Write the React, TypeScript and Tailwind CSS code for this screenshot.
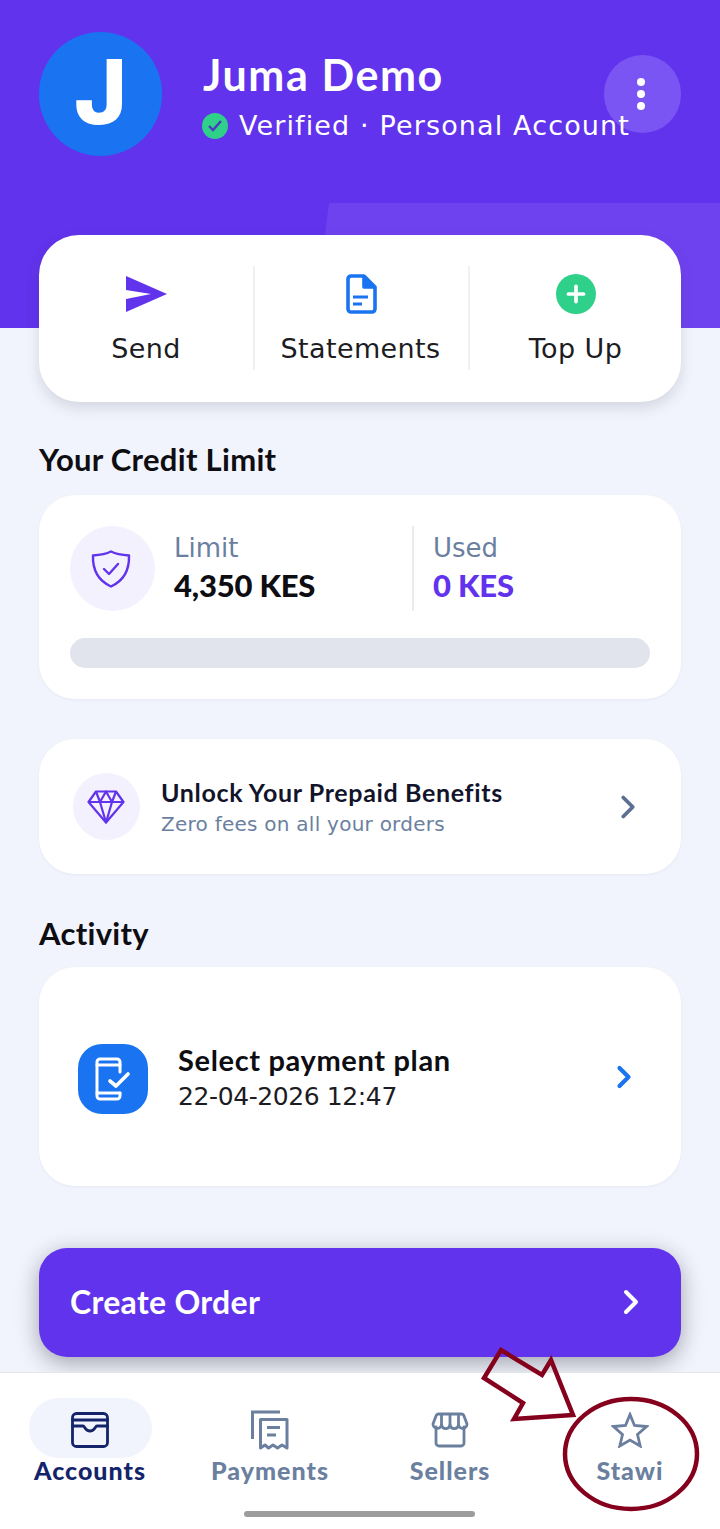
import { ChevronRight, Plus } from "lucide-react";

const heading = "font-['Lato','Liberation_Sans',sans-serif]";
const body = "font-['DejaVu_Sans','Noto_Sans',sans-serif]";

const SendIcon = () => (
  <svg width="42" height="36" viewBox="0 0 42 36" fill="#6133ec">
    <path d="M1 0 L42 18 L1 36 L1 23 L26 18 L1 14 Z" />
  </svg>
);

const StatementIcon = () => (
  <svg width="32" height="40" viewBox="0 0 32 40" fill="none" stroke="#1a73f0" strokeWidth="3.6" strokeLinejoin="round">
    <path d="M3 5 a3 3 0 0 1 3-3 h13 l11 11 v22 a3 3 0 0 1-3 3 h-21 a3 3 0 0 1-3-3 Z" />
    <path d="M19 2 v11 h11" fill="#1a73f0" />
    <path d="M8 23 h15 M8 30 h9" strokeWidth="3" />
  </svg>
);

const ShieldIcon = () => (
  <svg width="40" height="38" viewBox="0 0 40 38" fill="none" stroke="#6133ec" strokeWidth="2.4" strokeLinejoin="round" strokeLinecap="round">
    <path d="M20 1.5 C25 4 31 5 38 5.5 C38.5 20 32 31 20 36.5 C8 31 1.5 20 2 5.5 C9 5 15 4 20 1.5 Z" />
    <path d="M13 19 L18 24 L27 14" />
  </svg>
);

const DiamondIcon = () => (
  <svg width="38" height="34" viewBox="0 0 38 34" fill="none" stroke="#6133ec" strokeWidth="2.2" strokeLinejoin="round">
    <path d="M9 1.5 H29 L36.5 12 L19 32.5 L1.5 12 Z" />
    <path d="M1.5 12 H36.5 M9 1.5 L13 12 L19 1.5 L25 12 L29 1.5 M13 12 L19 32.5 L25 12" />
  </svg>
);

const PhoneCheckIcon = () => (
  <svg width="36" height="44" viewBox="0 0 36 44" fill="none" stroke="#fff" strokeWidth="3" strokeLinecap="round" strokeLinejoin="round">
    <path d="M25 15 V5 a3 3 0 0 0-3-3 H5 a3 3 0 0 0-3 3 V39 a3 3 0 0 0 3 3 H22 a3 3 0 0 0 3-3 V36" />
    <path d="M2 8 H25 M2 36 H25" />
    <path d="M15 24 L21 29 L33 17" strokeWidth="3.6" />
  </svg>
);

const WalletIcon = () => (
  <svg width="38" height="36" viewBox="0 0 38 36" fill="none" stroke="#14246b" strokeWidth="2.8" strokeLinejoin="round" strokeLinecap="round">
    <rect x="1.5" y="1.5" width="35" height="33" rx="4" />
    <path d="M1.5 8 H36.5" />
    <path d="M1.5 14 H12 C14 14 14 19 19 19 C24 19 24 14 26 14 H36.5" />
  </svg>
);

const ReceiptIcon = () => (
  <svg width="38" height="40" viewBox="0 0 38 40" fill="none" stroke="#6b7f9f" strokeWidth="3">
    <path d="M1.5 29 V2 H29" />
    <path d="M9.5 38 V9.5 H36 V38 L31 35 L26.5 38 L22 35 L17.500 38 L14 35 Z" strokeLinejoin="round" />
    <path d="M16 17.500 H29 M16 25 H25" />
  </svg>
);

const StoreIcon = () => (
  <svg width="38" height="36" viewBox="0 0 38 36" fill="none" stroke="#6b7f9f" strokeWidth="2.800" strokeLinejoin="round" strokeLinecap="round">
    <path d="M5 15 V31 a3 3 0 0 0 3 3 H30 a3 3 0 0 0 3-3 V15" />
    <path d="M8 2 H30 a3 3 0 0 1 3 2 L36 12 a4.300 4.300 0 0 1-8.500 1 a4.300 4.300 0 0 1-8.500 0 a4.300 4.300 0 0 1-8.500 0 a4.300 4.300 0 0 1-8.500-1 L5 4 a3 3 0 0 1 3-2 Z" />
    <path d="M10.500 2.500 V13 M19 2.500 V13 M27.500 2.500 V13" />
  </svg>
);

const StarIcon = () => (
  <svg width="38" height="36" viewBox="0 0 38 36" fill="none" stroke="#6b7f9f" strokeWidth="2.800" strokeLinejoin="miter">
    <path d="M19 2.500 L23.500 13.500 L35.500 14.500 L26.500 22.500 L29.200 34 L19 28 L8.800 34 L11.500 22.500 L2.500 14.500 L14.500 13.500 Z" />
  </svg>
);

const ActionItem = ({ icon, label, className }: { icon: React.ReactNode; label: string; className: string }) => (
  <div className={`flex flex-col items-center h-[104px] ${className}`}>
    <div className="h-[40px] mt-[8px] flex items-center justify-center">{icon}</div>
    <span className={`${body} mt-[17px] text-[27px] leading-[36px] tracking-[0.4px] text-[#1c1c22]`}>{label}</span>
  </div>
);

const NavItem = ({ icon, label, active }: { icon: React.ReactNode; label: string; active?: boolean }) => (
  <div className="w-[180px] flex flex-col items-center">
    <div className={`w-[123px] h-[60px] rounded-full flex items-center justify-center pt-[3px] ${active ? "bg-[#f1f4fc]" : ""}`}>
      {icon}
    </div>
    <span className={`${heading} font-black text-[25px] leading-[26px] -mt-[1px] tracking-[1px] ${active ? "text-[#14246b]" : "text-[#6b7f9f]"}`}>
      {label}
    </span>
  </div>
);

export default function App() {
  return (
    <div className="relative w-[720px] h-[1529px] overflow-hidden bg-[#f1f4fc] flex flex-col">
      <header className="relative h-[328px] shrink-0 bg-[#6133ec] overflow-hidden">
        <div className="absolute left-[313px] top-[203px] w-[420px] h-[130px] bg-[#6f42f0] [clip-path:polygon(16px_0,100%_0,100%_100%,0_100%)]" />
        <div className="absolute left-[604px] top-[55px] w-[77px] h-[78px] rounded-full bg-[#7b55f3] flex flex-col items-center justify-center gap-[4px] pr-[3px]">
          <span className="w-[8px] h-[8px] rounded-full bg-white" />
          <span className="w-[8px] h-[8px] rounded-full bg-white" />
          <span className="w-[8px] h-[8px] rounded-full bg-white" />
        </div>
        <div className="relative flex items-start pl-[39px] pt-[32px]">
          <div className="w-[123px] h-[124px] rounded-full bg-[#1a73f0] flex items-center justify-center">
            <span className="font-['Inter','Liberation_Sans',sans-serif] font-extrabold text-white text-[90px] leading-none -mt-[4px]">J</span>
          </div>
          <div className="ml-[41px] pt-[19px]">
            <div className={`${heading} font-bold text-white text-[43px] leading-[48px] tracking-[1.6px]`}>Juma Demo</div>
            <div className="flex items-center mt-[9px]">
              <span className="w-[26px] h-[26px] -ml-[1px] rounded-full bg-[#2fd08a] flex items-center justify-center">
                <svg width="16" height="14" viewBox="0 0 16 14" fill="none" stroke="#4a3ac0" strokeWidth="2.400">
                  <path d="M2 7 L6 11 L14 2" />
                </svg>
              </span>
              <span className={`${body} ml-[11px] text-white text-[27px] leading-[36px] tracking-[1.13px] whitespace-nowrap`}>
                Verified · Personal Account
              </span>
            </div>
          </div>
        </div>
      </header>

      <main className="relative -mt-[93px] px-[39px] flex flex-col">
        <section className="h-[167px] bg-white rounded-[40px] shadow-[0_6px_14px_rgba(60,60,90,0.16)] flex pt-[31px]">
          <ActionItem icon={<SendIcon />} label="Send" className="w-[216px] border-r-2 border-[#eef0f4]" />
          <ActionItem icon={<StatementIcon />} label="Statements" className="w-[215px] border-r-2 border-[#eef0f4] pr-[2px]" />
          <ActionItem
            icon={
              <span className="w-[40px] h-[40px] rounded-full bg-[#2fd08a] flex items-center justify-center">
                <Plus size={26} color="#fff" strokeWidth={3.400} />
              </span>
            }
            label="Top Up"
            className="flex-1"
          />
        </section>

        <h2 className={`${heading} font-bold text-[31px] leading-[38px] text-[#0d0d12] mt-[38px] mb-[1px] tracking-[0.3px]`}>Your Credit Limit</h2>

        <section className="mt-[16px] h-[204px] bg-white rounded-[36px] shadow-[0_1px_3px_rgba(60,60,90,0.06)] px-[31px] pt-[31px]">
          <div className="flex items-center h-[85px]">
            <div className="w-[85px] h-[85px] rounded-full bg-[#f4f1fe] flex items-center justify-center pr-[3px]">
              <ShieldIcon />
            </div>
            <div className="ml-[19px] w-[240px] h-full border-r-2 border-[#e9ebf0]">
              <div className={`${body} text-[26px] leading-[34px] text-[#6b7f9f] mt-[5px]`}>Limit</div>
              <div className={`${heading} font-black text-[31px] leading-[38px] text-[#0d0d12] mt-[1px] -tracking-[0.2px]`}>4,350 KES</div>
            </div>
            <div className="ml-[19px] h-full">
              <div className={`${body} text-[26px] leading-[34px] text-[#6b7f9f] mt-[5px]`}>Used</div>
              <div className={`${heading} font-black text-[31px] leading-[38px] text-[#6133ec] mt-[1px] -tracking-[0.2px]`}>0 KES</div>
            </div>
          </div>
          <div className="mt-[27px] h-[30px] rounded-full bg-[#e1e4ec]" />
        </section>

        <section className="mt-[40px] h-[135px] bg-white rounded-[36px] shadow-[0_1px_3px_rgba(60,60,90,0.06)] flex items-center pl-[34px] pr-[38px]">
          <div className="w-[67px] h-[67px] rounded-full bg-[#f4f1fe] flex items-center justify-center pr-[2px]">
            <DiamondIcon />
          </div>
          <div className="ml-[21px] flex-1 pt-[2px]">
            <div className={`${heading} font-bold text-[25px] leading-[32px] tracking-[0.65px] text-[#12142b]`}>Unlock Your Prepaid Benefits</div>
            <div className={`${body} text-[20px] leading-[29px] tracking-[0.25px] text-[#6b7f9f] mt-[2px]`}>Zero fees on all your orders</div>
          </div>
          <ChevronRight size={38} color="#5c6f91" strokeWidth={2.400} className="-mr-[4px]" />
        </section>

        <h2 className={`${heading} font-bold text-[31px] leading-[38px] text-[#0d0d12] mt-[40px] tracking-[0.3px]`}>Activity</h2>

        <section className="mt-[15px] h-[219px] bg-white rounded-[36px] shadow-[0_1px_3px_rgba(60,60,90,0.06)] flex items-center pl-[39px] pr-[38px]">
          <div className="w-[70px] h-[70px] mt-[4px] rounded-[24px] bg-[#1a73f0] flex items-center justify-center">
            <PhoneCheckIcon />
          </div>
          <div className="ml-[30px] flex-1 pt-[2px]">
            <div className={`${heading} font-bold text-[29px] leading-[36px] tracking-[0.65px] text-[#0d0d12]`}>Select payment plan</div>
            <div className={`${body} text-[25px] leading-[34px] -tracking-[0.4px] text-[#1c1c22] mt-[2px]`}>22-04-2026 12:47</div>
          </div>
          <ChevronRight size={36} color="#1a73f0" strokeWidth={2.800} className="mr-[1px]" />
        </section>

        <button className="mt-[62px] h-[109px] rounded-[28px] bg-[#6133ec] shadow-[0_6px_22px_rgba(30,30,50,0.38)] flex items-center justify-between pl-[31px] pr-[30px] pb-[2px]">
          <span className={`${heading} font-bold text-[32px] tracking-[0.3px] text-white`}>Create Order</span>
          <ChevronRight size={40} color="#fff" strokeWidth={2.400} />
        </button>
      </main>

      <nav className="absolute left-0 right-0 top-[1372px] h-[157px] bg-white border-t border-[#e4e4e9] flex pt-[25px]">
        <div className="flex w-full">
          <NavItem icon={<WalletIcon />} label="Accounts" active />
          <NavItem icon={<ReceiptIcon />} label="Payments" />
          <NavItem icon={<StoreIcon />} label="Sellers" />
          <NavItem icon={<StarIcon />} label="Stawi" />
        </div>
        <div className="absolute left-[244px] top-[138px] w-[231px] h-[6px] rounded-full bg-[#9c9c9c]" />
      </nav>

      {/* red markup drawn over the screenshot */}
      <svg className="absolute left-0 top-0 pointer-events-none" width="720" height="1529" viewBox="0 0 720 1529" fill="none" stroke="#85001c" strokeWidth="4.500">
        <path d="M501 1350 L542 1375 L551 1360 L573 1415 L514 1419 L523 1403 L484 1378 Z" strokeLinejoin="miter" />
        <ellipse cx="631" cy="1454" rx="66" ry="55" />
      </svg>
    </div>
  );
}
